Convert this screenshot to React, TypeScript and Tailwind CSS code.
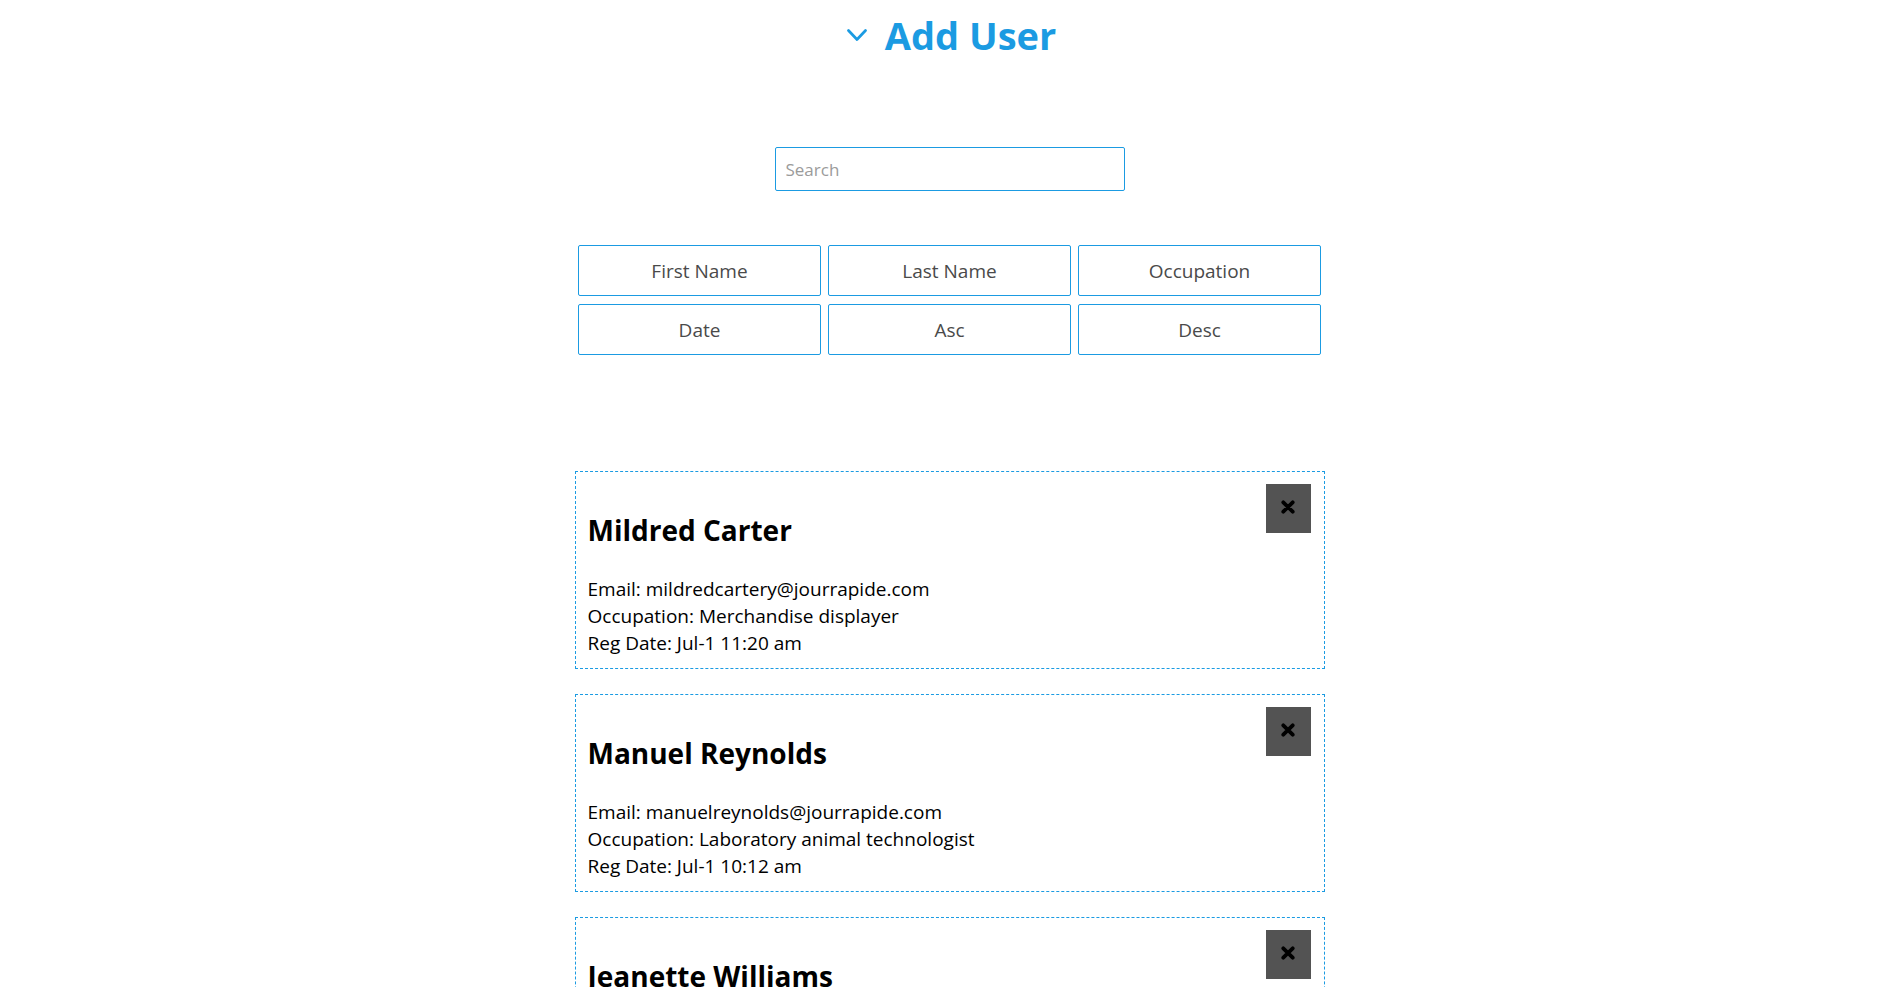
import { useState } from "react";

type User = {
  name: string;
  email: string;
  occupation: string;
  registered: string;
};

const initialUsers: User[] = [
  { name: "Mildred Carter", email: "mildredcartery@jourrapide.com", occupation: "Merchandise displayer", registered: "Jul-1 11:20 am" },
  { name: "Manuel Reynolds", email: "manuelreynolds@jourrapide.com", occupation: "Laboratory animal technologist", registered: "Jul-1 10:12 am" },
  { name: "Jeanette Williams", email: "", occupation: "", registered: "" },
];

const filters = ["First Name", "Last Name", "Occupation", "Date", "Asc", "Desc"];

function ChevronDown() {
  return (
    <svg width="20" height="14" viewBox="0 0 20 14" fill="none" stroke="currentColor" strokeWidth="2.7" strokeLinecap="round" strokeLinejoin="round" aria-hidden="true">
      <path d="M1.5 2.5 L10 11.5 L18.5 2.5" />
    </svg>
  );
}

function CloseIcon() {
  return (
    <svg width="14" height="14" viewBox="0 0 14 14" fill="none" stroke="currentColor" strokeWidth="3.8" strokeLinecap="round" aria-hidden="true">
      <path d="M2.3 2.3 L11.7 11.7 M11.7 2.3 L2.3 11.7" />
    </svg>
  );
}

function UserCard({ user, onRemove }: { user: User; onRemove: () => void }) {
  return (
    <li className="flex items-start justify-between border border-dashed border-[#1b9be2] pt-3 pr-[13px] pb-[11px] pl-3">
      <div className="pt-[26px]">
        <h2 className="mb-[26px] text-[28px] leading-10 font-bold">{user.name}</h2>
        {user.email && <p>Email: {user.email}</p>}
        {user.occupation && <p>Occupation: {user.occupation}</p>}
        {user.registered && <p>Reg Date: {user.registered}</p>}
      </div>
      <button type="button" aria-label={`Remove ${user.name}`} onClick={onRemove} className="flex h-[49px] w-[45px] items-start justify-center bg-[#535353] pt-4">
        <CloseIcon />
      </button>
    </li>
  );
}

export default function App() {
  const [users, setUsers] = useState(initialUsers);
  const [query, setQuery] = useState("");
  const shown = users.filter((u) => u.name.toLowerCase().includes(query.toLowerCase()));

  return (
    <main className="h-screen overflow-hidden bg-white pr-4 pl-[17px] font-['Open_Sans','Noto_Sans',sans-serif] text-[19px] leading-[27px] text-black">
      <h1 className="flex justify-center pt-2 pl-1 text-[38px] leading-[54px] font-bold text-[#1b9be2]">
        <button type="button" className="flex items-center gap-[18px]">
          <ChevronDown />
          Add User
        </button>
      </h1>

      <input
        type="search"
        aria-label="Search"
        placeholder="Search"
        value={query}
        onChange={(e) => setQuery(e.target.value)}
        className="mx-auto mt-[85px] block h-11 w-full max-w-[350px] rounded-xs border border-[#1b9be2] px-2.5 text-[17px] placeholder:text-[#9b9b9b]"
      />

      <div className="mx-auto mt-[54px] grid max-w-[743px] grid-cols-3 gap-x-[7px] gap-y-2">
        {filters.map((label) => (
          <button key={label} type="button" className="h-[51px] rounded-xs border border-[#1b9be2] pt-0.5 text-[19px] text-[#4a4a4a]">
            {label}
          </button>
        ))}
      </div>

      <ul className="mx-auto mt-[116px] grid max-w-[750px] gap-[25px]">
        {shown.map((user) => (
          <UserCard key={user.name} user={user} onRemove={() => setUsers(users.filter((u) => u !== user))} />
        ))}
      </ul>
    </main>
  );
}
